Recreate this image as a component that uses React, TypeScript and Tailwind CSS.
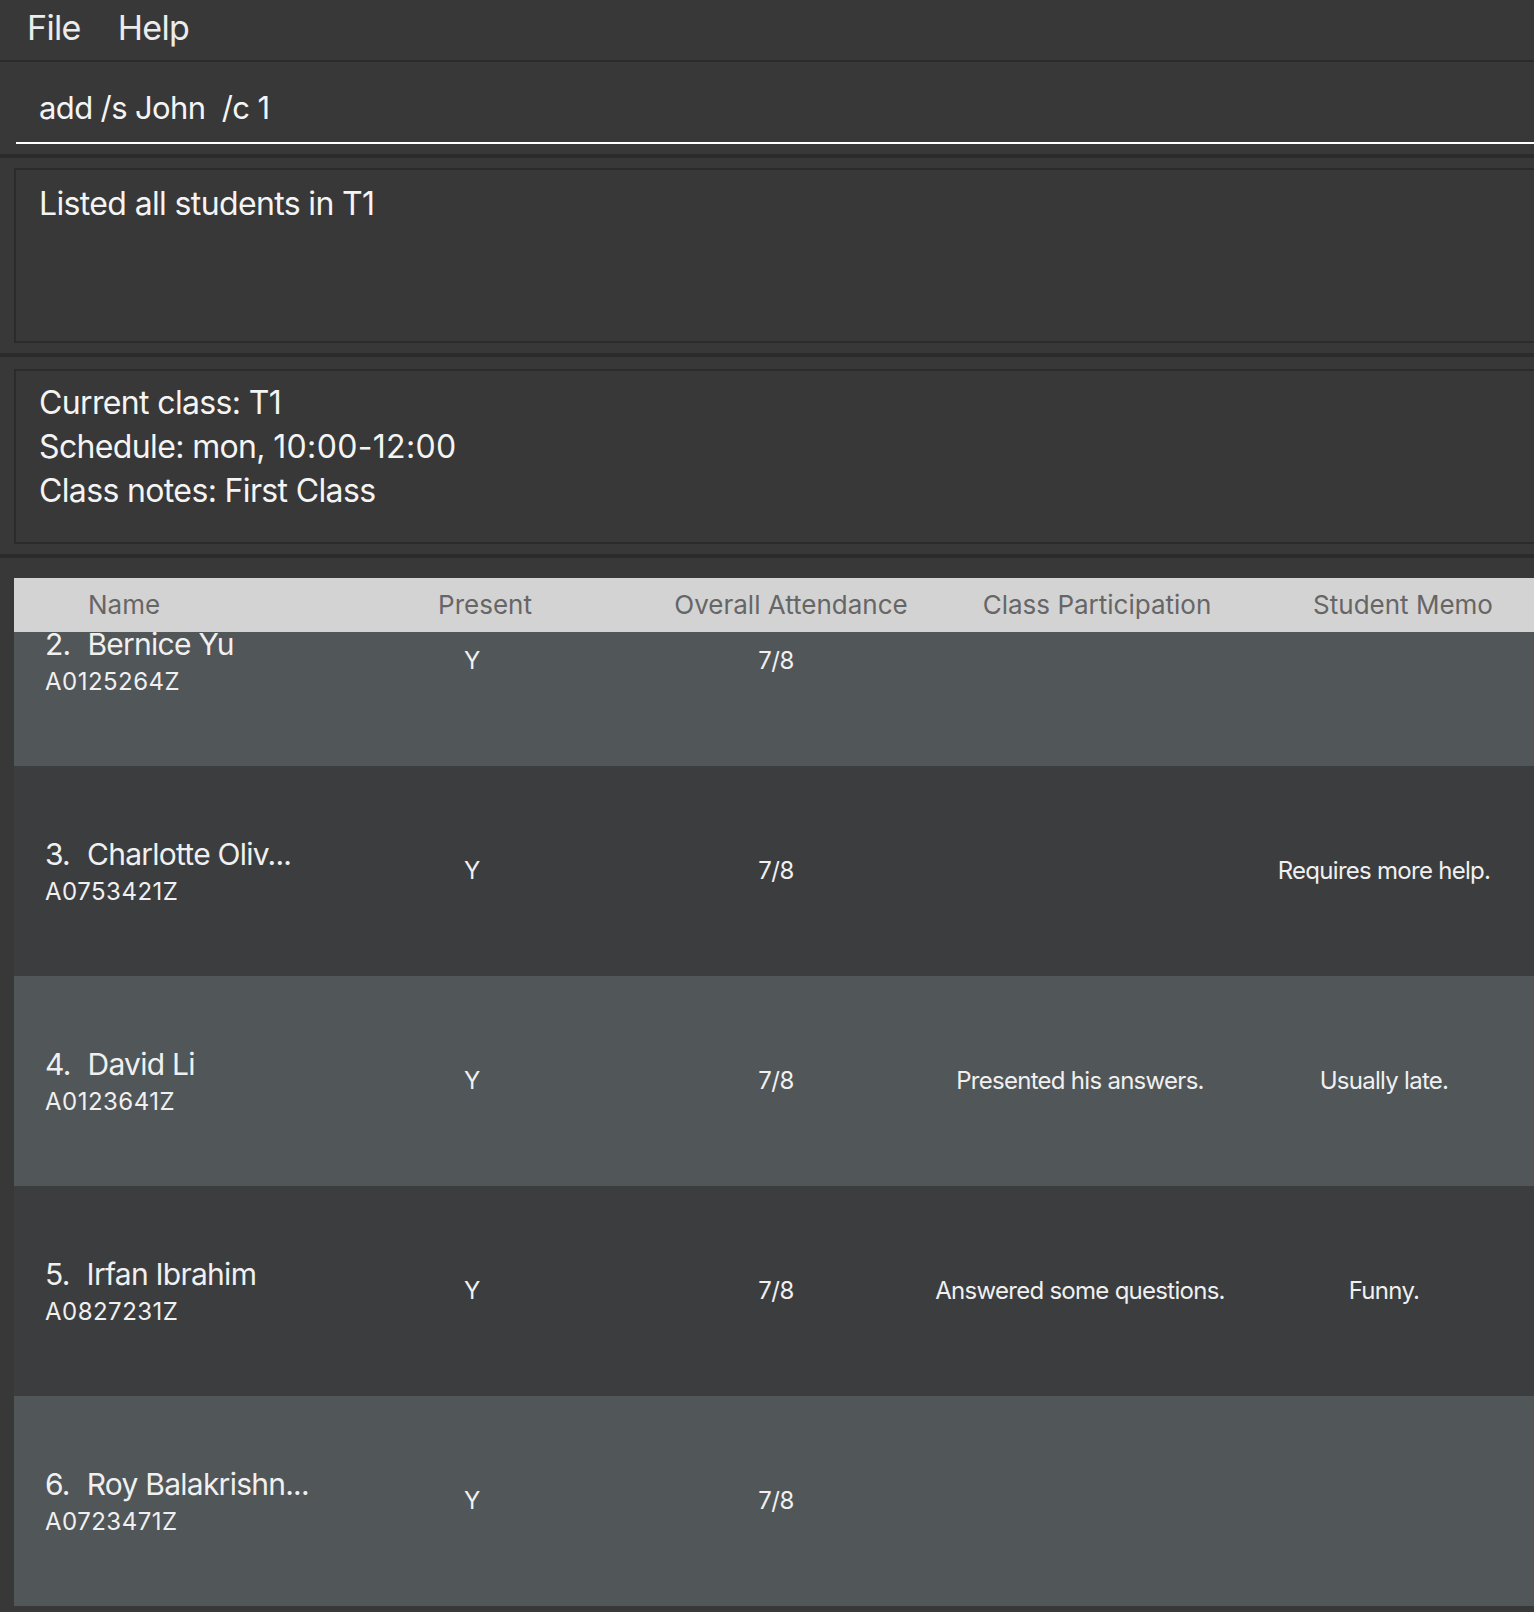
import React from "react";

type Student = {
  index: number;
  name: string;
  id: string;
  present: string;
  attendance: string;
  participation: string;
  memo: string;
};

const students: Student[] = [
  { index: 2, name: "Bernice Yu", id: "A0125264Z", present: "Y", attendance: "7/8", participation: "", memo: "" },
  { index: 3, name: "Charlotte Oliv...", id: "A0753421Z", present: "Y", attendance: "7/8", participation: "", memo: "Requires more help." },
  { index: 4, name: "David Li", id: "A0123641Z", present: "Y", attendance: "7/8", participation: "Presented his answers.", memo: "Usually late." },
  { index: 5, name: "Irfan Ibrahim", id: "A0827231Z", present: "Y", attendance: "7/8", participation: "Answered some questions.", memo: "Funny." },
  { index: 6, name: "Roy Balakrishn...", id: "A0723471Z", present: "Y", attendance: "7/8", participation: "", memo: "" },
];

const headers = ["Present", "Overall Attendance", "Class Participation", "Student Memo"];

function StudentRow({ s, light }: { s: Student; light: boolean }) {
  return (
    <div
      className={`grid h-[210px] grid-cols-[306px_304px_304px_304px_304px] items-center text-[#f0f0f0] ${
        light ? "bg-[#515659]" : "bg-[#3c3d3f]"
      }`}
    >
      <div className="pl-[31px]">
        <div className="flex gap-[17px] whitespace-nowrap text-[30px] leading-[36px] tracking-[-0.025em]">
          <span>{s.index}.</span>
          <span>{s.name}</span>
        </div>
        <div className="mt-[5px] text-[24px] leading-[30px] tracking-[0.02em]">{s.id}</div>
      </div>
      <div className="text-center text-[24px] tracking-[-0.02em]">{s.present}</div>
      <div className="text-center text-[24px] tracking-[-0.02em]">{s.attendance}</div>
      <div className="whitespace-nowrap text-center text-[24px] tracking-[-0.03em]">{s.participation}</div>
      <div className="whitespace-nowrap text-center text-[24px] tracking-[-0.03em]">{s.memo}</div>
    </div>
  );
}

export default function App() {
  return (
    <div className="h-[1612px] w-[1534px] overflow-hidden bg-[#383838] font-['Inter','Liberation_Sans',sans-serif] text-white">
      {/* menu bar */}
      <div className="flex h-[60px] items-start gap-[37px] pl-[27px] text-[34px] leading-[56px] tracking-[-0.02em] text-[#ececec]">
        <span>File</span>
        <span>Help</span>
      </div>
      <div className="h-[2px] bg-[#2b2b2b]" />

      {/* command box */}
      <div className="ml-[16px] border-b-2 border-white pb-[14px] pl-[23px] pt-[26px] text-[31px] leading-[40px] tracking-[-0.02em] text-[#f4f4f4]">
        add /s John&nbsp; /c 1
      </div>
      <div className="my-[10px] h-[4px] bg-[#2b2b2b]" />

      {/* result display */}
      <div className="ml-[14px] h-[175px] border-y-2 border-l-2 border-[#2b2b2b] pl-[23px] pt-[12px] text-[32px] leading-[43px] tracking-[-0.02em] text-[#f4f4f4]">
        Listed all students in T1
      </div>
      <div className="mb-[12px] mt-[10px] h-[4px] bg-[#2b2b2b]" />

      {/* class info */}
      <div className="ml-[14px] h-[175px] border-y-2 border-l-2 border-[#2b2b2b] pl-[23px] pt-[10px] text-[32px] leading-[44px] tracking-[-0.02em] text-[#f4f4f4]">
        <div>Current class: T1</div>
        <div>
          Schedule: mon, <span className="tracking-[0.01em]">10:00-12:00</span>
        </div>
        <div>Class notes: First Class</div>
      </div>
      <div className="mb-[20px] mt-[10px] h-[4px] bg-[#2b2b2b]" />

      {/* student table */}
      <div className="ml-[14px] h-[1028px] w-[1560px] overflow-hidden">
        <div className="relative z-10 grid h-[54px] grid-cols-[318px_306px_306px_306px_306px] items-center bg-[#d3d3d3] text-[26px] leading-[54px] text-[#666666]">
          <div className="pl-[74px]">Name</div>
          {headers.map((h) => (
            <div key={h} className="text-center">
              {h}
            </div>
          ))}
        </div>
        <div className="-mt-[76px]">
          {students.map((s, i) => (
            <StudentRow key={s.index} s={s} light={i % 2 === 0} />
          ))}
        </div>
      </div>
    </div>
  );
}
